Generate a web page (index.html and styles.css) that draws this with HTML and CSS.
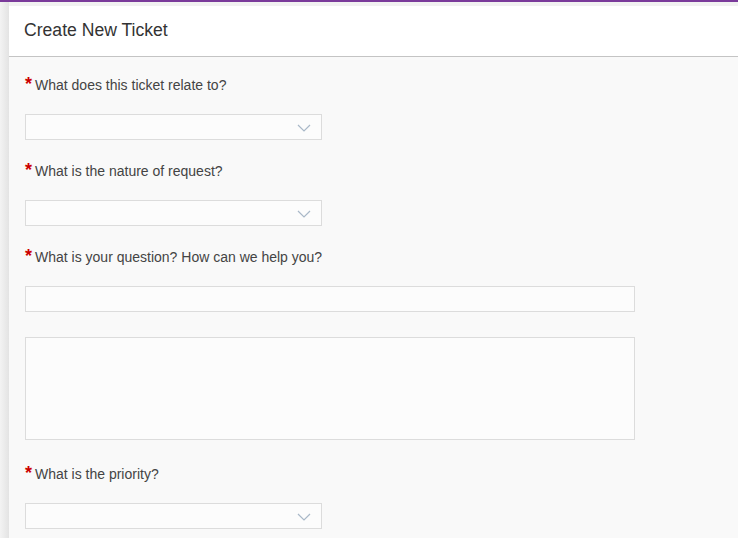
FILE: index.html
```html
<!DOCTYPE html>
<html>
<head>
<meta charset="utf-8">
<link rel="stylesheet" href="styles.css">
</head>
<body>
<div class="page">
  <div class="panel">
    <div class="header"><h1 class="title">Create New Ticket</h1></div>
    <form class="form">
      <div class="field">
        <label class="label"><span class="req">*</span>What does this ticket relate to?</label>
        <div class="select"><svg class="chev" width="14" height="8" viewBox="0 0 14 8"><path d="M1 1 L7 7 L13 1" fill="none" stroke="#a9b8c8" stroke-width="1.2"/></svg></div>
      </div>
      <div class="field">
        <label class="label"><span class="req">*</span>What is the nature of request?</label>
        <div class="select"><svg class="chev" width="14" height="8" viewBox="0 0 14 8"><path d="M1 1 L7 7 L13 1" fill="none" stroke="#a9b8c8" stroke-width="1.2"/></svg></div>
      </div>
      <div class="field">
        <label class="label"><span class="req">*</span>What is your question? How can we help you?</label>
        <div class="input"></div>
        <div class="textarea"></div>
      </div>
      <div class="field field-last">
        <label class="label"><span class="req">*</span>What is the priority?</label>
        <div class="select"><svg class="chev" width="14" height="8" viewBox="0 0 14 8"><path d="M1 1 L7 7 L13 1" fill="none" stroke="#a9b8c8" stroke-width="1.2"/></svg></div>
      </div>
    </form>
  </div>
</div>
</body>
</html>
```
FILE: styles.css
```css
html, body {
  margin: 0;
  padding: 0;
  height: 100%;
}
body {
  background: #f1f1f1;
  border-top: 2px solid #7a3a9a;
  box-sizing: border-box;
  font-family: "Liberation Sans", Arial, sans-serif;
  overflow: hidden;
}
.page {
  padding: 4px 0 0 9px;
  height: 100%;
  box-sizing: border-box;
  background: linear-gradient(to right, #f3f3f3 0px, #e3e3e3 9px, transparent 9px);
}
.panel {
  background: #f9f9f9;
  height: 100%;
}
.header {
  background: #ffffff;
  height: 50px;
  border-bottom: 1px solid #c4c4c4;
  display: flex;
  align-items: center;
  padding-left: 15px;
}
.title {
  margin: 0;
  font-size: 17.6px;
  font-weight: normal;
  color: #333333;
  padding-bottom: 1px;
}
.form {
  padding: 19px 0 0 16px;
  display: flex;
  flex-direction: column;
  gap: 22px;
}
.field {
  display: flex;
  flex-direction: column;
  align-items: flex-start;
}
.field-last {
  margin-top: 3px;
}
.label {
  display: flex;
  align-items: center;
  height: 18px;
  font-size: 14px;
  color: #444444;
  margin-bottom: 20px;
}
.req {
  color: #cc0000;
  font-size: 18px;
  font-weight: bold;
  width: 10px;
  line-height: 18px;
  position: relative;
  top: -1px;
}
.select {
  width: 297px;
  height: 26px;
  box-sizing: border-box;
  border: 1px solid #dcdcdc;
  background: #fcfcfc;
  display: flex;
  align-items: center;
  justify-content: flex-end;
  padding-right: 10px;
}
.chev {
  display: block;
  margin-top: 2px;
}
.input {
  width: 610px;
  height: 26px;
  box-sizing: border-box;
  border: 1px solid #dcdcdc;
  background: #fcfcfc;
}
.textarea {
  width: 610px;
  height: 103px;
  box-sizing: border-box;
  border: 1px solid #dcdcdc;
  background: #fcfcfc;
  margin-top: 25px;
}
```
